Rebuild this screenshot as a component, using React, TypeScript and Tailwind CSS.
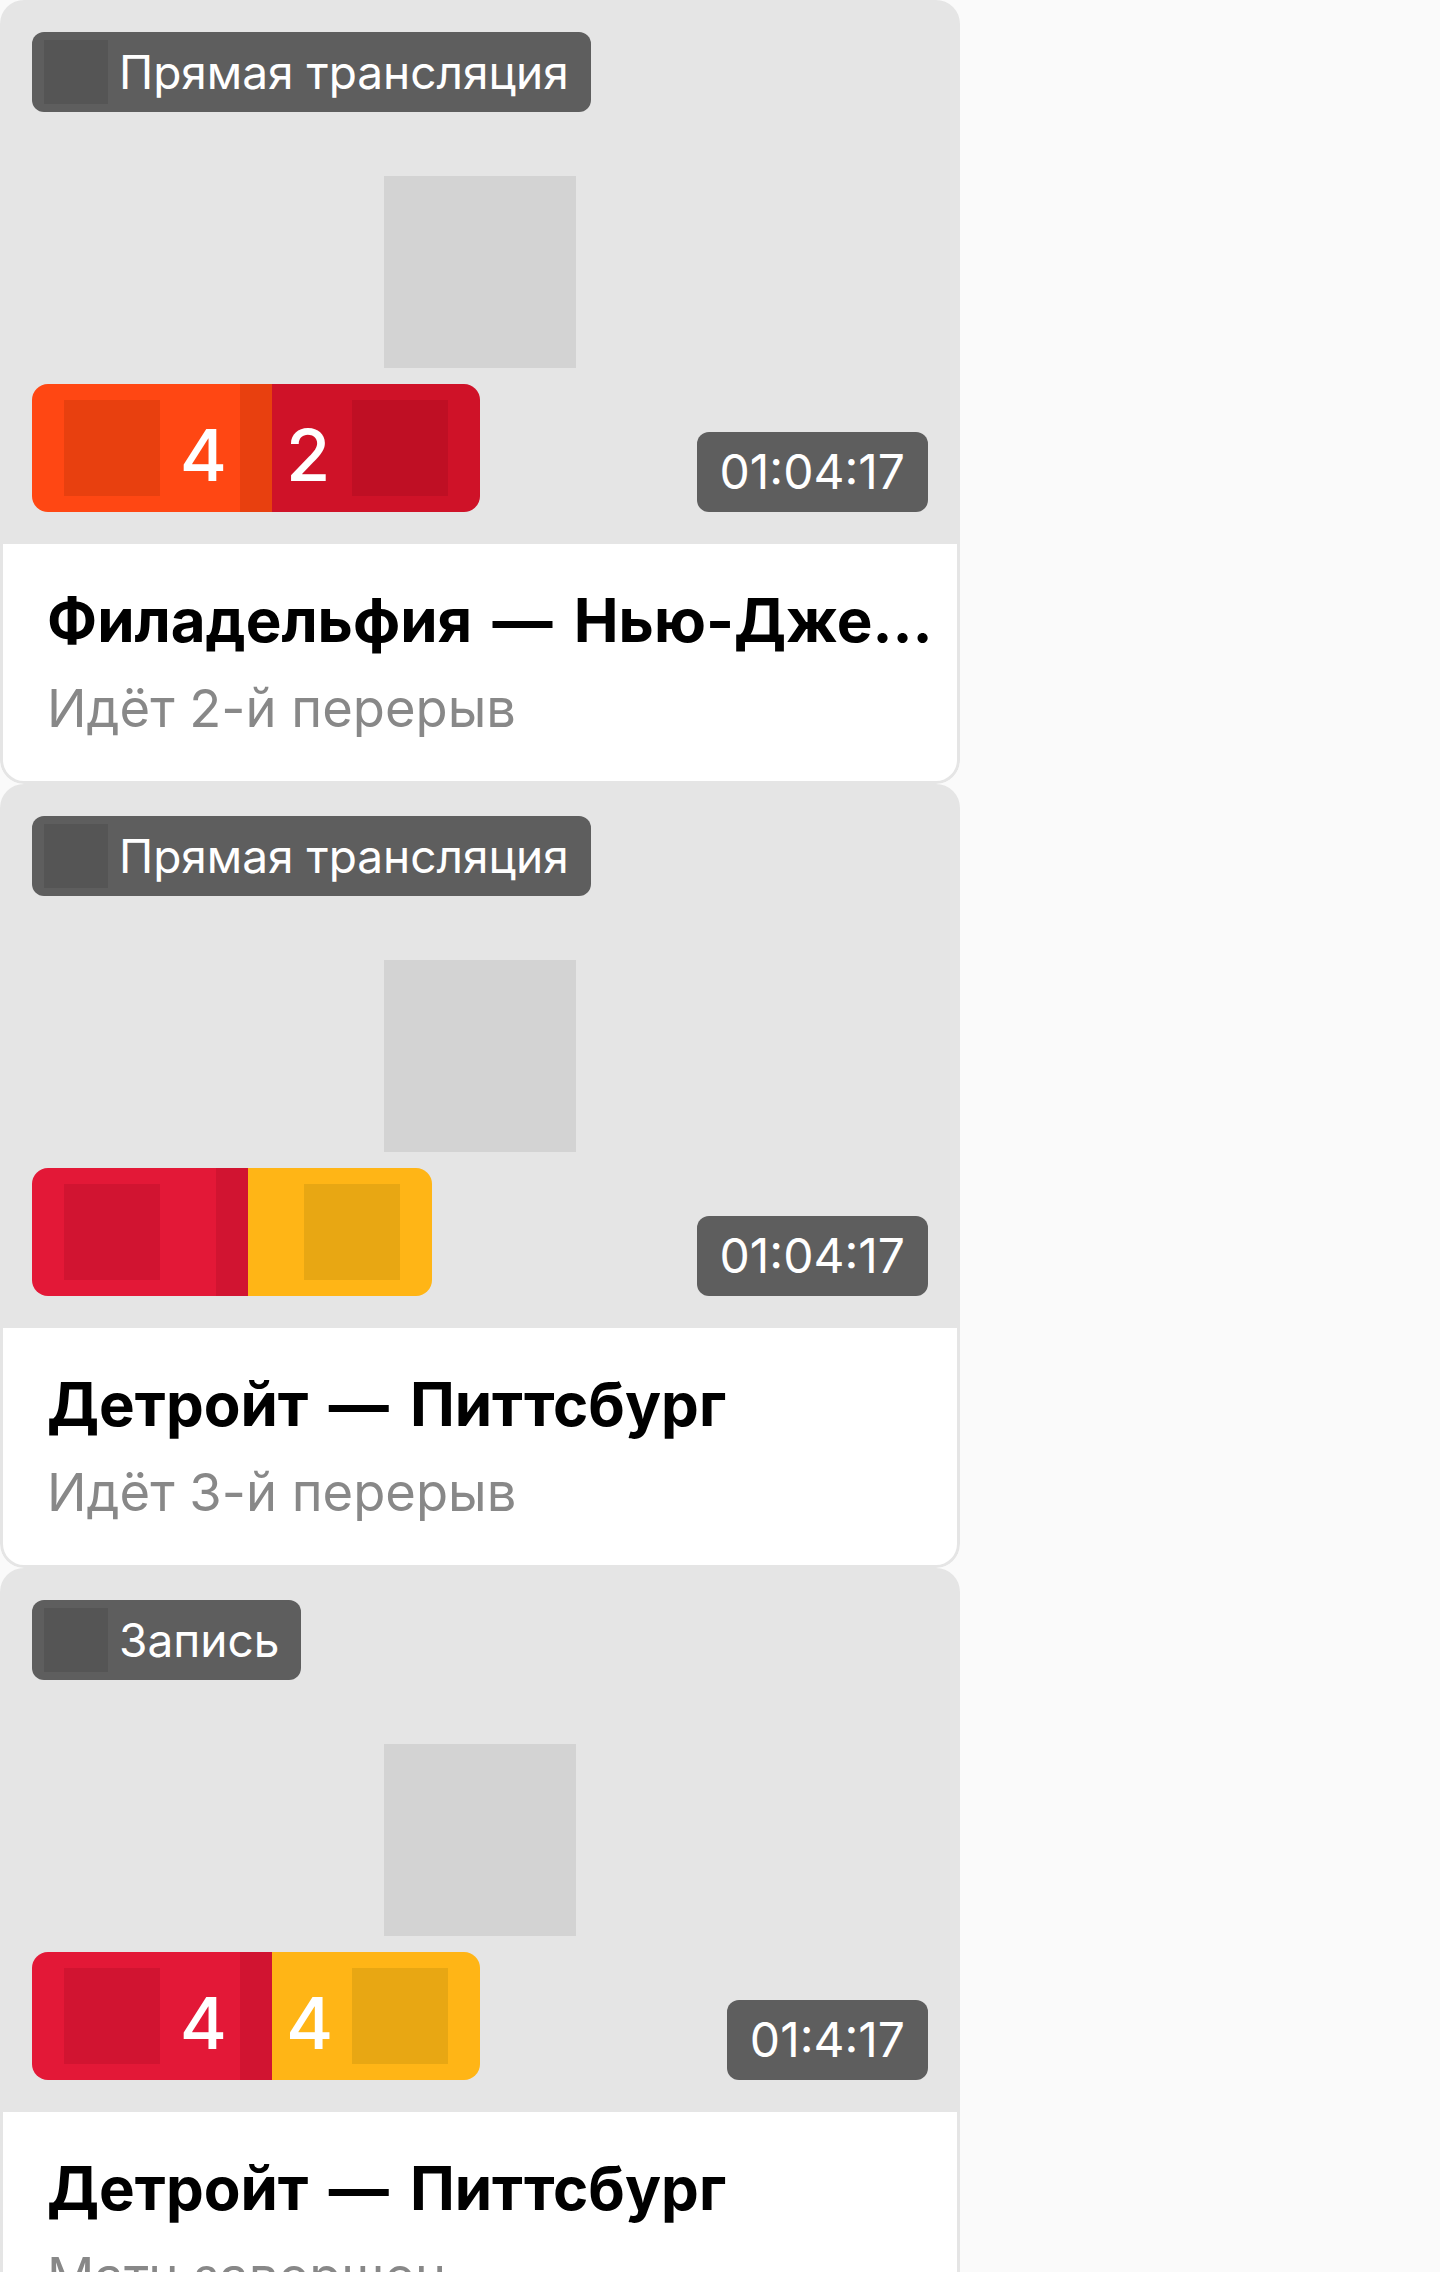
type Team = { bg: string; dark: string };

type Match = {
  status: string;
  home: string;
  away: string;
  note: string;
  time: string;
  left: Team;
  right: Team;
  score?: [number, number];
};

const orange: Team = { bg: "bg-[#ff4713]", dark: "bg-[#e8400f]" };
const crimson: Team = { bg: "bg-[#cf1228]", dark: "bg-[#bf0f24]" };
const red: Team = { bg: "bg-[#e31837]", dark: "bg-[#d11431]" };
const yellow: Team = { bg: "bg-[#ffb516]", dark: "bg-[#e8a713]" };

const matches: Match[] = [
  {
    status: "Прямая трансляция",
    home: "Филадельфия",
    away: "Нью-Джерси",
    note: "Идёт 2-й перерыв",
    time: "01:04:17",
    left: orange,
    right: crimson,
    score: [4, 2],
  },
  {
    status: "Прямая трансляция",
    home: "Детройт",
    away: "Питтсбург",
    note: "Идёт 3-й перерыв",
    time: "01:04:17",
    left: red,
    right: yellow,
  },
  {
    status: "Запись",
    home: "Детройт",
    away: "Питтсбург",
    note: "Матч завершен",
    time: "01:4:17",
    left: red,
    right: yellow,
    score: [4, 4],
  },
];

function ScoreBar({ m }: { m: Match }) {
  const hasScore = !!m.score;
  return (
    <div className="flex h-[128px] overflow-hidden rounded-[16px]">
      <div className={`flex items-center pl-[32px] ${hasScore ? "" : "pr-[56px]"} ${m.left.bg}`}>
        <div className={`h-[96px] w-[96px] ${m.left.dark}`} />
        {m.score && (
          <span className="mt-[13px] w-[80px] pr-[13px] text-right text-[72px] font-medium leading-none text-white">
            {m.score[0]}
          </span>
        )}
      </div>
      <div className={`w-[32px] ${m.left.dark}`} />
      <div className={`flex items-center pr-[32px] ${hasScore ? "" : "pl-[56px]"} ${m.right.bg}`}>
        {m.score && (
          <span className="mt-[13px] w-[80px] pl-[14px] text-left text-[72px] font-medium leading-none text-white">
            {m.score[1]}
          </span>
        )}
        <div className={`h-[96px] w-[96px] ${m.right.dark}`} />
      </div>
    </div>
  );
}

function MatchCard({ m }: { m: Match }) {
  return (
    <div className="w-[960px] overflow-hidden rounded-[24px]">
      {/* Preview area */}
      <div className="flex h-[544px] flex-col bg-[#e5e5e5] p-[32px]">
        <div className="flex h-[80px] items-center self-start rounded-[12px] bg-[#5e5e5e] pl-[12px] pr-[22px]">
          <div className="h-[64px] w-[64px] bg-[#555555]" />
          <span className="ml-[11px] text-[46px] leading-none text-white">{m.status}</span>
        </div>
        <div className="mt-[64px] h-[192px] w-[192px] self-center bg-[#d3d3d3]" />
        <div className="mt-[16px] flex items-end justify-between">
          <ScoreBar m={m} />
          <div className="flex h-[80px] items-center rounded-[12px] bg-[#5e5e5e] px-[23px] text-[48px] leading-none text-white">
            {m.time}
          </div>
        </div>
      </div>

      {/* Info */}
      <div className="h-[240px] rounded-b-[24px] border-x-[3px] border-b-[3px] border-[#e5e5e5] bg-white pl-[44px] pr-[12px] pt-[40px]">
        <div className="truncate text-[60px] font-bold leading-[72px] text-black">
          {m.home} <span className="ml-[6px] mr-[7px]">—</span> {m.away}
        </div>
        <div className="mt-[16px] truncate text-[52.5px] leading-[72px] text-[#888888]">{m.note}</div>
      </div>
    </div>
  );
}

export default function App() {
  return (
    <div className="min-h-screen bg-[#fafafa] font-['Inter','Liberation_Sans',sans-serif]">
      <div className="flex flex-col">
        {matches.map((m, i) => (
          <MatchCard key={i} m={m} />
        ))}
      </div>
    </div>
  );
}
